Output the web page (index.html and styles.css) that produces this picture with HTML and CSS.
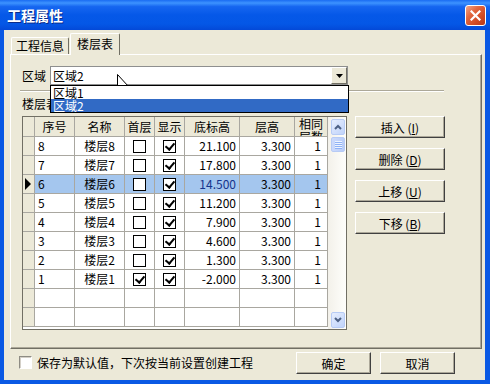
FILE: index.html
```html
<!DOCTYPE html>
<html lang="zh-CN">
<head>
    <meta charset="UTF-8">
    <title>工程属性</title>
    <link rel="stylesheet" href="styles.css">
</head>
<body>

<div class="window">
    <div class="titlebar">
        <span class="title">工程属性</span>
        <span class="close">
            <svg width="11" height="11" viewBox="0 0 11 11"><path d="M1.5 1.5 L9.5 9.5 M9.5 1.5 L1.5 9.5" stroke="#fff" stroke-width="2.2" stroke-linecap="square"/></svg>
        </span>
    </div>

    <div class="frame">
        <div class="tabs">
            <div class="tab">工程信息</div>
            <div class="tab active">楼层表</div>
        </div>

        <div class="panel">
            <div class="area-row">
                <span class="label">区域</span>
                <div class="combo">
                    <span class="combo-text">区域2</span>
                    <span class="combo-btn">
                        <svg width="7" height="4" viewBox="0 0 7 4"><polygon points="0,0 7,0 3.5,4" fill="#000"/></svg>
                    </span>
                    <div class="combo-list">
                        <div class="combo-item">区域1</div>
                        <div class="combo-item selected">区域2</div>
                    </div>
                </div>
            </div>

            <div class="separator"></div>
            <div class="section-label">楼层表</div>

            <div class="grid-row">
                <div class="grid">
                    <div class="table">
                        <div class="row head">
                            <div class="c s"></div>
                            <div class="c h">序号</div>
                            <div class="c h">名称</div>
                            <div class="c h">首层</div>
                            <div class="c h">显示</div>
                            <div class="c h">底标高</div>
                            <div class="c h">层高</div>
                            <div class="c h wrap">相同层数</div>
                        </div>
                        <div class="row">
                            <div class="c s"></div>
                            <div class="c left">8</div>
                            <div class="c center">楼层8</div>
                            <div class="c k"><span class="cb"></span></div>
                            <div class="c k"><span class="cb on"></span></div>
                            <div class="c num">21.100</div>
                            <div class="c num">3.300</div>
                            <div class="c num cnt">1</div>
                        </div>
                        <div class="row">
                            <div class="c s"></div>
                            <div class="c left">7</div>
                            <div class="c center">楼层7</div>
                            <div class="c k"><span class="cb"></span></div>
                            <div class="c k"><span class="cb on"></span></div>
                            <div class="c num">17.800</div>
                            <div class="c num">3.300</div>
                            <div class="c num cnt">1</div>
                        </div>
                        <div class="row sel">
                            <div class="c s"><span class="pointer"></span></div>
                            <div class="c left">6</div>
                            <div class="c center">楼层6</div>
                            <div class="c k"><span class="cb"></span></div>
                            <div class="c k"><span class="cb on"></span></div>
                            <div class="c num focus">14.500</div>
                            <div class="c num">3.300</div>
                            <div class="c num cnt">1</div>
                        </div>
                        <div class="row">
                            <div class="c s"></div>
                            <div class="c left">5</div>
                            <div class="c center">楼层5</div>
                            <div class="c k"><span class="cb"></span></div>
                            <div class="c k"><span class="cb on"></span></div>
                            <div class="c num">11.200</div>
                            <div class="c num">3.300</div>
                            <div class="c num cnt">1</div>
                        </div>
                        <div class="row">
                            <div class="c s"></div>
                            <div class="c left">4</div>
                            <div class="c center">楼层4</div>
                            <div class="c k"><span class="cb"></span></div>
                            <div class="c k"><span class="cb on"></span></div>
                            <div class="c num">7.900</div>
                            <div class="c num">3.300</div>
                            <div class="c num cnt">1</div>
                        </div>
                        <div class="row">
                            <div class="c s"></div>
                            <div class="c left">3</div>
                            <div class="c center">楼层3</div>
                            <div class="c k"><span class="cb"></span></div>
                            <div class="c k"><span class="cb on"></span></div>
                            <div class="c num">4.600</div>
                            <div class="c num">3.300</div>
                            <div class="c num cnt">1</div>
                        </div>
                        <div class="row">
                            <div class="c s"></div>
                            <div class="c left">2</div>
                            <div class="c center">楼层2</div>
                            <div class="c k"><span class="cb"></span></div>
                            <div class="c k"><span class="cb on"></span></div>
                            <div class="c num">1.300</div>
                            <div class="c num">3.300</div>
                            <div class="c num cnt">1</div>
                        </div>
                        <div class="row">
                            <div class="c s"></div>
                            <div class="c left">1</div>
                            <div class="c center">楼层1</div>
                            <div class="c k"><span class="cb on"></span></div>
                            <div class="c k"><span class="cb on"></span></div>
                            <div class="c num">-2.000</div>
                            <div class="c num">3.300</div>
                            <div class="c num cnt">1</div>
                        </div>
                        <div class="row">
                            <div class="c s"></div><div class="c"></div><div class="c"></div><div class="c"></div>
                            <div class="c"></div><div class="c"></div><div class="c"></div><div class="c"></div>
                        </div>
                        <div class="row">
                            <div class="c s"></div><div class="c"></div><div class="c"></div><div class="c"></div>
                            <div class="c"></div><div class="c"></div><div class="c"></div><div class="c"></div>
                        </div>
                    </div>

                    <div class="scrollbar">
                        <div class="sb-btn">
                            <svg width="8" height="6" viewBox="0 0 8 6"><polyline points="1,5 4,2 7,5" fill="none" stroke="#4D6185" stroke-width="2"/></svg>
                        </div>
                        <div class="sb-thumb"><span class="grip"></span></div>
                        <div class="sb-space"></div>
                        <div class="sb-btn">
                            <svg width="8" height="6" viewBox="0 0 8 6"><polyline points="1,1 4,4 7,1" fill="none" stroke="#4D6185" stroke-width="2"/></svg>
                        </div>
                    </div>
                </div>

                <div class="side-buttons">
                    <button class="btn">插入 (<u>I</u>)</button>
                    <button class="btn">删除 (<u>D</u>)</button>
                    <button class="btn">上移 (<u>U</u>)</button>
                    <button class="btn">下移 (<u>B</u>)</button>
                </div>
            </div>
        </div>

        <div class="footer">
            <label class="check"><span class="box"></span>保存为默认值，下次按当前设置创建工程</label>
            <div class="footer-buttons">
                <button class="btn wide">确定</button>
                <button class="btn wide">取消</button>
            </div>
        </div>
    </div>

    <svg class="cursor" width="13" height="21" viewBox="0 0 13 21">
        <path d="M0.5 0.5 L0.5 17.5 L4.5 13.5 L7.5 20.5 L9.5 19.5 L6.5 12.5 L11.5 12.5 Z" fill="#fff" stroke="#000" stroke-width="1"/>
    </svg>
</div>

</body>
</html>
```

FILE: styles.css
```css
* { box-sizing: border-box; margin: 0; padding: 0; }
body { background: #fff; font-family: "Noto Sans CJK SC", "Noto Sans", sans-serif; font-size: 12px; color: #000; }

.window { width: 490px; height: 384px; display: flex; flex-direction: column; position: relative; background: #ECE9D8; overflow: hidden; }

/* title bar */
.titlebar { height: 30px; display: flex; align-items: center; padding: 0 4px 0 7px; background: linear-gradient(#1A6CF2 0%, #3D93FF 10%, #1666F0 22%, #0558E8 50%, #0457E6 80%, #0349D8 100%); }
.title { flex: 1; color: #fff; font-weight: bold; font-size: 14px; line-height: 18px; text-shadow: 1px 1px 0 #0A2C8A; }
.close { width: 21px; height: 21px; display: flex; align-items: center; justify-content: center; border: 1px solid #fff; border-radius: 3px; background: linear-gradient(135deg, #F0A68A 0%, #E2673F 35%, #CF4A24 70%, #B8391A 100%); }

/* window frame */
.frame { flex: 1; display: flex; flex-direction: column; border: 0 solid #0A59E4; border-width: 0 5px 4px 4px; padding: 3px 3px 0 6px; }

/* tabs */
.tabs { height: 21px; display: flex; align-items: flex-end; padding-left: 1px; position: relative; z-index: 1; }
.tab { height: 17px; padding: 0 4px; line-height: 15px; background: #ECE9D8; border: 1px solid #fff; border-right-color: #716F64; border-bottom: none; border-radius: 2px 2px 0 0; white-space: nowrap; }
.tab.active { height: 22px; margin: 0 0 -1px 1px; padding: 0 6px; line-height: 19px; }

.panel { height: 295px; padding: 11px 0 0 11px; border: 1px solid; border-color: #fff #716F64 #716F64 #fff; box-shadow: inset -1px -1px 0 #ACA899; }

/* area selector */
.area-row { display: flex; align-items: center; height: 19px; }
.label { width: 28px; line-height: 19px; }
.combo { position: relative; width: 298px; height: 19px; display: flex; background: #fff; border: 1px solid #8E8F8F; }
.combo-text { flex: 1; padding-left: 2px; line-height: 17px; }
.combo-btn { width: 16px; height: 17px; display: flex; align-items: center; justify-content: center; background: #ECE9D8; border: 1px solid; border-color: #fff #716F64 #716F64 #fff; }
.combo-list { position: absolute; left: -1px; top: 18px; width: 299px; border: 1px solid #000; background: #fff; z-index: 2; }
.combo-item { height: 13px; line-height: 13px; padding-left: 2px; }
.combo-item.selected { background: #316AC5; color: #fff; }

.separator { width: 424px; height: 2px; margin: 5px 0 0 -2px; border-top: 1px solid #ACA899; border-bottom: 1px solid #fff; }
.section-label { height: 14px; margin-top: 5px; line-height: 14px; }

/* floor grid */
.grid-row { display: flex; align-items: flex-start; margin-top: 5px; }
.grid { width: 325px; height: 214px; display: flex; overflow: hidden; background: #fff; border: 1px solid #716F64; }
.table { width: 305px; display: grid; grid-template-columns: 12px 40px 50px 30px 30px 55px 55px 33px; grid-template-rows: 20px; grid-auto-rows: 19px; align-content: start; }
.row { display: contents; }
.c { overflow: hidden; white-space: nowrap; line-height: 18px; border-right: 1px solid #A9A7A0; border-bottom: 1px solid #A9A7A0; }
.s { background: #ECE9D8; display: flex; align-items: center; }
.h { background: #ECE9D8; text-align: center; line-height: 19px; }
.h.wrap { white-space: normal; line-height: 13px; }
.left { padding-left: 3px; }
.center { text-align: center; }
.num { text-align: right; padding-right: 3px; }
.num.cnt { padding-right: 6px; }
.k { display: flex; align-items: center; justify-content: center; }
.row.sel > .c:not(.s) { background: #A4C6EE; }
.focus { color: #14348C; }
.pointer { width: 0; height: 0; margin-left: 2px; border-left: 6px solid #000; border-top: 6px solid transparent; border-bottom: 6px solid transparent; }

.cb { position: relative; width: 13px; height: 13px; background: #fff; border: 1px solid #000; }
.cb.on::after { content: ""; position: absolute; left: 3px; top: 0; width: 4px; height: 7px; border: solid #000; border-width: 0 2px 2px 0; transform: rotate(40deg); }

/* scrollbar */
.scrollbar { width: 18px; display: flex; flex-direction: column; padding: 2px 1px 1px 3px; background: linear-gradient(to right, #F3F1EA, #FEFEFB); }
.sb-btn { height: 16px; display: flex; align-items: center; justify-content: center; border: 1px solid #B7CBF5; border-radius: 2px; background: linear-gradient(135deg, #E6EEFE, #C0D3FA); }
.sb-thumb { height: 15px; margin-top: 2px; display: flex; align-items: center; justify-content: center; border: 1px solid #B7CBF5; border-radius: 2px; background: linear-gradient(to right, #CCDAFC, #B9CDF8); }
.grip { width: 7px; height: 8px; background: repeating-linear-gradient(#EEF4FE 0 1px, #8FB2F6 1px 2px); }
.sb-space { flex: 1; }

/* buttons */
.btn { height: 22px; font: inherit; color: #000; background: #ECE9D8; border: 1px solid; border-color: #fff #404040 #404040 #fff; box-shadow: inset -1px -1px 0 #ACA899; }
.side-buttons { display: flex; flex-direction: column; gap: 10px; margin-left: 8px; }
.side-buttons .btn { width: 90px; }
.btn.wide { width: 75px; }

/* footer */
.footer { height: 31px; display: flex; align-items: flex-start; padding-top: 3px; }
.check { display: flex; align-items: center; gap: 5px; height: 13px; margin: 4px 0 0 9px; line-height: 13px; }
.box { width: 13px; height: 13px; background: #fff; border: 1px solid; border-color: #8E8C84 #fff #fff #8E8C84; box-shadow: inset 1px 1px 0 #D4D0C8; }
.footer-buttons { display: flex; gap: 9px; margin: 0 27px 0 auto; }

.cursor { position: absolute; left: 117px; top: 74px; }
```
